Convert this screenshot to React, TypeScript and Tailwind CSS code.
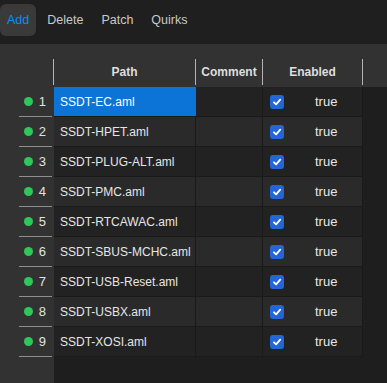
const rows = [
  "SSDT-EC.aml",
  "SSDT-HPET.aml",
  "SSDT-PLUG-ALT.aml",
  "SSDT-PMC.aml",
  "SSDT-RTCAWAC.aml",
  "SSDT-SBUS-MCHC.aml",
  "SSDT-USB-Reset.aml",
  "SSDT-USBX.aml",
  "SSDT-XOSI.aml",
];

const tabs = ["Add", "Delete", "Patch", "Quirks"];

function Check() {
  return (
    <span className="flex h-[14px] w-[14px] items-center justify-center rounded-[3px] bg-[#2466d8]">
      <svg width="10" height="10" viewBox="0 0 10 10" fill="none">
        <path d="M2 5.3 L4.1 7.4 L8.2 2.6" stroke="white" strokeWidth="1.8" strokeLinecap="round" strokeLinejoin="round" />
      </svg>
    </span>
  );
}

export default function App() {
  return (
    <div className="flex h-[383px] w-[387px] flex-col overflow-hidden bg-[#323232] text-[13px] font-['Liberation_Sans',Arial,sans-serif]">
      {/* tab bar */}
      <div className="flex h-[44px] shrink-0 items-start gap-[4px] bg-[#1f1f1f] pt-[4px] text-[12.5px]">
        {tabs.map((t, i) => (
          <div
            key={t}
            className={
              i === 0
                ? "flex h-[32px] items-center rounded-[6px] bg-[#3a3a3a] px-[7px] text-[#0a8ef2]"
                : "flex h-[32px] items-center px-[7px] text-[#c9c9c9]"
            }
          >
            {t}
          </div>
        ))}
      </div>

      {/* header */}
      <div className="flex h-[43px] shrink-0 items-end pb-[2px] text-[12px] font-bold text-[#dedede]">
        <div className="w-[53px]" />
        <div className="flex h-[26px] w-[143px] items-center justify-center border-x border-[#b4b4b4]">Path</div>
        <div className="flex h-[26px] w-[67px] items-center justify-center border-r border-[#b4b4b4]">Comment</div>
        <div className="flex h-[26px] w-[100px] items-center justify-center border-r border-[#b4b4b4]">Enabled</div>
      </div>

      {/* body */}
      <div className="flex flex-1">
        <div className="w-[54px] shrink-0">
          {rows.map((_, i) => (
            <div key={i} className="flex h-[30px] flex-col">
              <div className="flex flex-1 items-center pl-[24px]">
                <span className="h-[9px] w-[9px] rounded-full bg-[#2fc65a]" />
                <span className="w-[13px] text-right text-[#e2e2e2]">{i + 1}</span>
              </div>
              <div className="ml-[19px] w-[33px] border-b border-[#8e8e8e]" />
            </div>
          ))}
        </div>
        <div className="flex-1 bg-[#1e1e1e]">
          {rows.map((name, i) => (
            <div
              key={name}
              className={`flex h-[30px] w-[309px] border-b border-[#1a1a1a] text-[#e6e6e6] ${
                i % 2 === 0 ? "bg-[#222222]" : "bg-[#2a2a2a]"
              }`}
            >
              <div
                className={`flex w-[142px] items-center whitespace-nowrap pl-[6px] text-[12px] ${
                  i === 0 ? "bg-[#0c74d6] text-white" : "border-r border-[#1a1a1a]"
                }`}
              >
                {name}
              </div>
              <div className="w-[67px] border-r border-[#1a1a1a]" />
              <div className="flex w-[100px] items-center border-r border-[#1a1a1a] pl-[7px]">
                <Check />
                <span className="ml-[31px]">true</span>
              </div>
            </div>
          ))}
        </div>
      </div>
    </div>
  );
}
